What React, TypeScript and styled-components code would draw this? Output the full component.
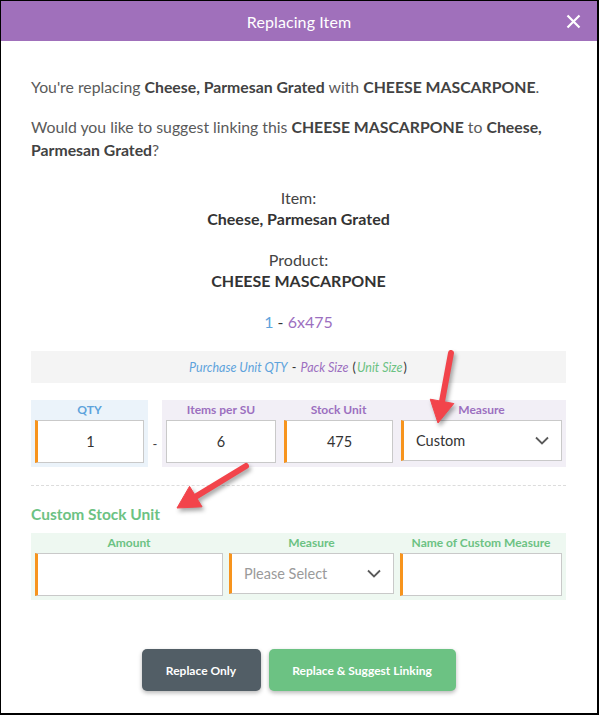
import React from "react";
import styled, { createGlobalStyle } from "styled-components";

const GlobalStyle = createGlobalStyle`
  html, body {
    margin: 0;
    padding: 0;
    background: #ffffff;
  }
  body {
    font-family: Lato, "Open Sans", sans-serif;
  }
`;

const Frame = styled.div`
  position: relative;
  box-sizing: border-box;
  width: 599px;
  height: 715px;
  border-style: solid;
  border-color: #000;
  border-width: 1px 2px 2px 1px;
  background: #fff;
  overflow: hidden;
`;

const Header = styled.div`
  height: 40px;
  background: #a070bb;
  display: grid;
  grid-template-columns: 1fr auto 1fr;
  align-items: center;
  color: #fff;
`;

const Title = styled.div`
  grid-column: 2;
  font-size: 16px;
  letter-spacing: 0.1px;
`;

const CloseBtn = styled.div`
  grid-column: 3;
  justify-self: end;
  margin-right: 16px;
  display: flex;
`;

const Body = styled.div`
  padding: 0 31px 0 30px;
  color: #5a5a5a;
`;

const Para = styled.p<{ $top: number }>`
  margin: ${(p) => p.$top}px 0 0;
  font-size: 15.8px;
  line-height: 23px;
  b {
    font-weight: 700;
    color: #424242;
  }
`;

const Summary = styled.div`
  margin-top: 26px;
  display: flex;
  flex-direction: column;
  align-items: center;
  font-size: 16px;
  line-height: 21px;
  color: #444;
`;

const SummaryValue = styled.div<{ $gap?: number }>`
  font-weight: 700;
  color: #333;
  margin-bottom: ${(p) => p.$gap ?? 0}px;
`;

const Spec = styled.div`
  margin-top: 20px;
  color: #333;
`;

const Legend = styled.div`
  margin-top: 19px;
  height: 32px;
  background: #f4f4f4;
  display: flex;
  align-items: center;
  justify-content: center;
  font-size: 12.5px;
  font-style: italic;
  color: #555;
`;

const Tint = styled.span<{ $c: string }>`
  color: ${(p) => p.$c};
`;

const Plain = styled.span`
  font-style: normal;
  color: #333;
  margin: 0 1px;
`;

const UnitRow = styled.div`
  margin-top: 17px;
  display: flex;
  align-items: stretch;
`;

const Group = styled.div<{ $bg: string; $w?: number }>`
  box-sizing: border-box;
  background: ${(p) => p.$bg};
  padding: 0 4px 4px 4px;
  ${(p) => (p.$w ? `width: ${p.$w}px;` : "flex: 1;")}
`;

const Cols = styled.div<{ $cols: string; $gap: number }>`
  display: grid;
  grid-template-columns: ${(p) => p.$cols};
  column-gap: ${(p) => p.$gap}px;
`;

const Field = styled.div`
  display: flex;
  flex-direction: column;
`;

const Label = styled.div<{ $c: string }>`
  height: 20px;
  line-height: 20px;
  text-align: center;
  font-size: 12px;
  font-weight: 700;
  color: ${(p) => p.$c};
  white-space: nowrap;
`;

const Box = styled.div<{ $mark?: boolean; $h?: number; $align?: string }>`
  box-sizing: border-box;
  height: ${(p) => p.$h ?? 43}px;
  background: #fff;
  border: 1px solid #c9c9c9;
  border-left: ${(p) => (p.$mark ? "3px solid #f7941d" : "1px solid #c9c9c9")};
  display: flex;
  align-items: center;
  justify-content: ${(p) => p.$align ?? "center"};
  padding: 0 12px;
  font-size: 14.5px;
  color: #333;
`;

const Dash = styled.div`
  width: 14px;
  display: flex;
  align-items: center;
  justify-content: center;
  padding-top: 20px;
  font-size: 13px;
  color: #444;
`;

const SelectText = styled.span<{ $muted?: boolean }>`
  flex: 1;
  color: ${(p) => (p.$muted ? "#9a9a9a" : "#333")};
`;

const Divider = styled.div`
  margin-top: 18px;
  border-top: 1px dashed #dcdcdc;
`;

const SectionTitle = styled.div`
  margin-top: 18px;
  font-size: 15.5px;
  line-height: 21px;
  font-weight: 700;
  color: #6cc283;
`;

const CustomBand = styled.div`
  margin-top: 8px;
`;

const Actions = styled.div`
  margin-top: 49px;
  display: flex;
  justify-content: center;
  gap: 8px;
`;

const Btn = styled.button<{ $bg: string; $w: number }>`
  width: ${(p) => p.$w}px;
  height: 42px;
  border: none;
  border-radius: 5px;
  background: ${(p) => p.$bg};
  color: #fff;
  font-family: Lato, sans-serif;
  font-size: 12px;
  font-weight: 700;
  box-shadow: 0 2px 4px rgba(0, 0, 0, 0.28);
`;

const Overlay = styled.svg`
  position: absolute;
  left: -1px;
  top: -1px;
  width: 599px;
  height: 715px;
  pointer-events: none;
  filter: drop-shadow(2px 3px 2px rgba(0, 0, 0, 0.35));
`;

const Chevron = () => (
  <svg width="14" height="9" viewBox="0 0 14 9">
    <path d="M1 1.5 L7 7.5 L13 1.5" fill="none" stroke="#5a5a5a" strokeWidth="1.8" />
  </svg>
);

function Arrow({ x1, y1, x2, y2 }: { x1: number; y1: number; x2: number; y2: number }) {
  const dx = x2 - x1;
  const dy = y2 - y1;
  const len = Math.hypot(dx, dy);
  const ux = dx / len;
  const uy = dy / len;
  const hl = 22;
  const hw = 12;
  const bx = x2 - ux * hl;
  const by = y2 - uy * hl;
  const px = -uy;
  const py = ux;
  const pts = `${x2},${y2} ${bx + px * hw},${by + py * hw} ${bx - px * hw},${by - py * hw}`;
  return (
    <g fill="#f2444b" stroke="#f2444b">
      <line x1={x1} y1={y1} x2={bx + ux * 2} y2={by + uy * 2} strokeWidth="6" strokeLinecap="round" />
      <polygon points={pts} strokeWidth="1" strokeLinejoin="round" />
    </g>
  );
}

export default function App() {
  return (
    <>
      <GlobalStyle />
      <Frame>
        <Header>
          <Title>Replacing Item</Title>
          <CloseBtn>
            <svg width="15" height="15" viewBox="0 0 15 15">
              <path d="M1.5 1.5 L13.5 13.5 M13.5 1.5 L1.5 13.5" stroke="#fff" strokeWidth="2.2" />
            </svg>
          </CloseBtn>
        </Header>

        <Body>
          <Para $top={34}>
            You're replacing <b>Cheese, Parmesan Grated</b> with <b>CHEESE MASCARPONE</b>.
          </Para>
          <Para $top={17}>
            Would you like to suggest linking this <b>CHEESE MASCARPONE</b> to <b>Cheese, Parmesan Grated</b>?
          </Para>

          <Summary>
            <div>Item:</div>
            <SummaryValue $gap={20}>Cheese, Parmesan Grated</SummaryValue>
            <div>Product:</div>
            <SummaryValue>CHEESE MASCARPONE</SummaryValue>
            <Spec>
              <Tint $c="#5ea3dc">1</Tint> - <Tint $c="#9c6fc0">6x475</Tint>
            </Spec>
          </Summary>

          <Legend>
            <Tint $c="#5ea3dc">Purchase Unit QTY</Tint>
            <Plain>&nbsp;-&nbsp;</Plain>
            <Tint $c="#9c6fc0">Pack Size</Tint>
            <Plain>&nbsp;(</Plain>
            <Tint $c="#6cc283">Unit Size</Tint>
            <Plain>)</Plain>
          </Legend>

          <UnitRow>
            <Group $bg="#ebf3fa" $w={117}>
              <Field>
                <Label $c="#5ea3dc">QTY</Label>
                <Box $mark>1</Box>
              </Field>
            </Group>
            <Dash>-</Dash>
            <Group $bg="#f2eff6">
              <Cols $cols="110px 109px 1fr" $gap={8}>
                <Field>
                  <Label $c="#9c6fc0">Items per SU</Label>
                  <Box>6</Box>
                </Field>
                <Field>
                  <Label $c="#9c6fc0">Stock Unit</Label>
                  <Box $mark>475</Box>
                </Field>
                <Field>
                  <Label $c="#9c6fc0">Measure</Label>
                  <Box $mark $h={41} $align="space-between">
                    <SelectText>Custom</SelectText>
                    <Chevron />
                  </Box>
                </Field>
              </Cols>
            </Group>
          </UnitRow>

          <Divider />
          <SectionTitle>Custom Stock Unit</SectionTitle>

          <CustomBand>
            <Group $bg="#eef8f1">
              <Cols $cols="188px 165px 1fr" $gap={6}>
                <Field>
                  <Label $c="#6cc283">Amount</Label>
                  <Box $mark />
                </Field>
                <Field>
                  <Label $c="#6cc283">Measure</Label>
                  <Box $mark $h={41} $align="space-between">
                    <SelectText $muted>Please Select</SelectText>
                    <Chevron />
                  </Box>
                </Field>
                <Field>
                  <Label $c="#6cc283">Name of Custom Measure</Label>
                  <Box $mark />
                </Field>
              </Cols>
            </Group>
          </CustomBand>

          <Actions>
            <Btn $bg="#525e66" $w={119}>Replace Only</Btn>
            <Btn $bg="#6cc283" $w={187}>Replace &amp; Suggest Linking</Btn>
          </Actions>
        </Body>

        <Overlay viewBox="0 0 599 715">
          <Arrow x1={451} y1={353} x2={438} y2={423} />
          <Arrow x1={246} y1={466} x2={177} y2={508} />
        </Overlay>
      </Frame>
    </>
  );
}
